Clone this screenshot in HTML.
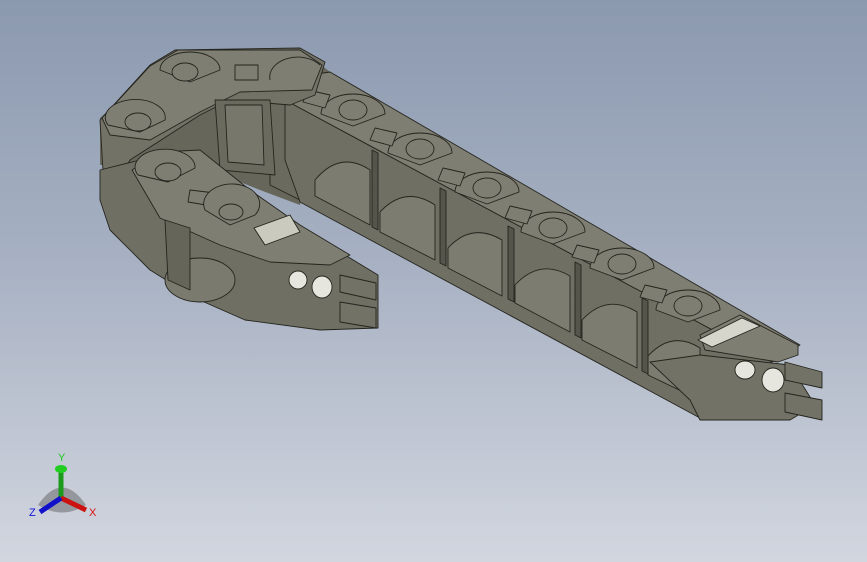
<!DOCTYPE html>
<html><head><meta charset="utf-8"><style>
html,body{margin:0;padding:0;width:867px;height:562px;overflow:hidden}
body{background:linear-gradient(#8b99af 0%,#a6b0c2 45%,#d2d6df 100%)}
svg{position:absolute;left:0;top:0}
</style></head><body>
<svg width="867" height="562" viewBox="0 0 867 562" xmlns="http://www.w3.org/2000/svg">
<g stroke="#25251f" stroke-width="0.9" stroke-linejoin="round">
<!-- backing fill for U bend -->
<polygon points="100,118 175,50 300,48 330,72 300,205 260,190 235,180 150,165 100,165" fill="#66665b" stroke="none"/>
<polygon points="270,95 300,95 300,200 270,185" fill="#6a6a5e"/>
<!-- LONG ARM side -->
<polygon points="285,100 772,362 778,400 700,418 300,202 285,160" fill="#6f6f63"/>
<g fill="#7c7c70">
<path d="M315,180 Q340,150 370,170 L370,225 L315,196Z"/>
<path d="M380,212 Q405,185 435,205 L435,260 L380,232Z"/>
<path d="M448,248 Q472,222 502,240 L502,296 L448,268Z"/>
<path d="M515,285 Q540,258 570,276 L570,332 L515,303Z"/>
<path d="M582,320 Q607,293 637,312 L637,368 L582,340Z"/>
<path d="M648,356 Q672,330 700,348 L700,400 L648,375Z"/>
</g>
<g fill="#55554b">
<polygon points="372,150 378,153 378,230 372,227"/>
<polygon points="440,188 446,191 446,266 440,263"/>
<polygon points="508,226 514,229 514,302 508,299"/>
<polygon points="575,262 581,265 581,338 575,335"/>
<polygon points="642,298 648,301 648,374 642,371"/>
</g>
<!-- LONG ARM top -->
<polygon points="290,78 330,72 800,345 772,362 285,100" fill="#7e7e72"/>
<g fill="#7e7e72">
<path d="M321,114 A32,20 0 1 1 385,114 L353,126Z"/>
<path d="M388,153 A32,20 0 1 1 452,153 L420,165Z"/>
<path d="M455,192 A32,20 0 1 1 519,192 L487,204Z"/>
<path d="M521,232 A32,20 0 1 1 585,232 L553,244Z"/>
<path d="M590,268 A32,20 0 1 1 654,268 L622,280Z"/>
<path d="M656,310 A32,20 0 1 1 720,310 L688,322Z"/>
<ellipse cx="353" cy="110" rx="14" ry="10"/><ellipse cx="420" cy="149" rx="14" ry="10"/>
<ellipse cx="487" cy="188" rx="14" ry="10"/><ellipse cx="553" cy="228" rx="14" ry="10"/>
<ellipse cx="622" cy="264" rx="14" ry="10"/><ellipse cx="688" cy="306" rx="14" ry="10"/>
<polygon points="308,90 330,95 325,108 303,102"/>
<polygon points="375,128 397,133 392,146 370,140"/>
<polygon points="443,168 465,173 460,186 438,180"/>
<polygon points="510,206 532,211 527,224 505,218"/>
<polygon points="577,245 599,250 594,263 572,257"/>
<polygon points="645,285 667,290 662,303 640,297"/>
</g>
<!-- END right -->
<polygon points="650,362 700,355 790,365 815,405 790,420 700,420 690,400" fill="#727266"/>
<polygon points="700,335 740,315 798,345 798,355 778,362 705,350" fill="#7e7e72"/>
<polygon points="698,340 742,318 760,326 712,347" fill="#d6d6cc"/>
<ellipse cx="745" cy="370" rx="10" ry="9" fill="#e6e6de"/>
<ellipse cx="773" cy="380" rx="11" ry="12" fill="#e6e6de"/>
<polygon points="785,362 822,372 822,388 785,380" fill="#727266"/>
<polygon points="785,393 822,400 822,420 785,412" fill="#727266"/>
<!-- U: top arm -->
<polygon points="100,120 150,65 175,50 300,48 325,62 315,95 290,105 230,100 200,115 130,160 105,205" fill="#727266"/>
<polygon points="102,118 150,66 178,50 300,50 322,65 312,90 240,92 200,112 150,140 110,135" fill="#7e7e72"/>
<path d="M160,70 A30,18 0 1 1 220,70 L190,82Z" fill="#7e7e72"/>
<ellipse cx="185" cy="72" rx="13" ry="9" fill="#7e7e72"/>
<polygon points="235,65 258,65 258,80 235,80" fill="#7e7e72"/>
<path d="M270,80 A28,20 0 0 1 320,65" fill="none"/>
<path d="M108,125 A30,18 0 1 1 165,120 L140,132Z" fill="#7e7e72"/>
<ellipse cx="138" cy="122" rx="13" ry="9" fill="#7e7e72"/>
<polygon points="215,100 270,100 275,175 220,170" fill="#6a6a5e"/>
<polygon points="225,105 262,105 264,165 228,162" fill="#77776b"/>
<!-- U: lower arm -->
<polygon points="100,170 140,160 240,200 345,255 378,275 378,328 320,330 245,320 195,298 150,270 110,230 100,200" fill="#6f6f63"/>
<polygon points="132,170 160,152 200,150 250,190 300,225 350,255 330,265 270,262 220,245 160,218" fill="#7e7e72"/>
<path d="M138,175 A30,18 0 1 1 195,168 L168,182Z" fill="#7e7e72"/>
<ellipse cx="168" cy="172" rx="13" ry="9" fill="#7e7e72"/>
<polygon points="190,190 215,193 212,206 188,202" fill="#7e7e72"/>
<path d="M205,210 A28,20 0 1 1 255,215 L230,225Z" fill="#7e7e72"/>
<ellipse cx="231" cy="212" rx="12" ry="8" fill="#7e7e72"/>
<polygon points="254,228 290,215 300,232 265,245" fill="#cacabe"/>
<ellipse cx="200" cy="280" rx="35" ry="22" fill="#7a7a6e"/>
<polygon points="165,220 190,228 190,290 168,280" fill="#65655a"/>
<ellipse cx="298" cy="280" rx="9" ry="9" fill="#e6e6de"/>
<ellipse cx="322" cy="287" rx="10" ry="11" fill="#e6e6de"/>
<polygon points="340,275 376,283 376,300 340,292" fill="#727266"/>
<polygon points="340,302 376,308 376,328 340,322" fill="#727266"/>
</g>
<!-- triad -->
<g>
<path d="M38,505 Q62,470 86,505 Q62,520 38,505Z" fill="#555" opacity="0.45"/>
<line x1="61" y1="498" x2="61" y2="470" stroke="#1c9a1c" stroke-width="5"/>
<ellipse cx="61" cy="469" rx="6" ry="4" fill="#22cc22"/>
<line x1="61" y1="498" x2="86" y2="510" stroke="#cc1111" stroke-width="5"/>
<line x1="61" y1="498" x2="40" y2="512" stroke="#1111cc" stroke-width="5"/>
<text x="58" y="461" font-family="Liberation Sans,sans-serif" font-size="11" fill="#22cc22">Y</text>
<text x="89" y="516" font-family="Liberation Sans,sans-serif" font-size="11" fill="#dd1111">X</text>
<text x="29" y="516" font-family="Liberation Sans,sans-serif" font-size="11" fill="#1111dd">Z</text>
</g>
</svg>
</body></html>
